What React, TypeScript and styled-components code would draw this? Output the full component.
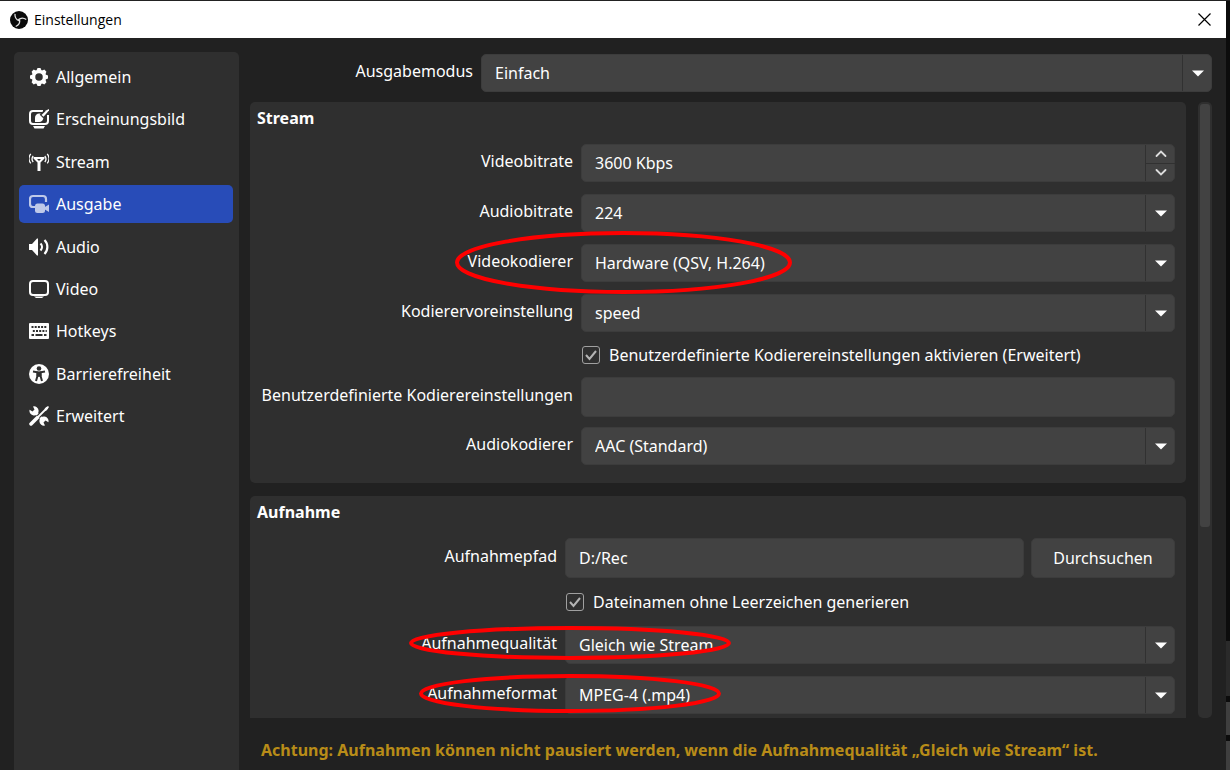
import React, { useState } from 'react';
import styled, { createGlobalStyle, css } from 'styled-components';

const GlobalStyle = createGlobalStyle`
  * { box-sizing: border-box; }
  html, body, #root { height: 100%; }
  body {
    margin: 0;
    background: #0c0c0c;
    color: #fefefe;
    font: 16px/22px 'Noto Sans', 'Open Sans', sans-serif;
    overflow: hidden;
  }
  button, input, select { font: inherit; color: inherit; }
`;

const Desktop = styled.div`
  height: 100vh;
  display: flex;
  border-top: 1px solid #222;
`;

const Window = styled.div`
  flex: 1;
  min-width: 0;
  display: flex;
  flex-direction: column;
  background: #212121;
`;

const Backdrop = styled.div`
  width: 4px;
  display: flex;
  flex-direction: column;
  justify-content: flex-end;
  gap: 6px;
`;

const BackdropPanel = styled.div<{ $h: number; $light?: boolean }>`
  height: ${(p) => p.$h}px;
  background: ${(p) => (p.$light ? '#3f3f3f' : '#2a2a2a')};
`;

const TitleBar = styled.header`
  height: 37px;
  flex: none;
  display: flex;
  align-items: center;
  gap: 6px;
  padding: 0 15px 0 10px;
  background: #fff;
  color: #000;
  font-family: 'Open Sans', sans-serif;
  font-size: 14px;
`;

const Title = styled.span`
  flex: 1;
`;

const CloseButton = styled.button`
  width: 14px;
  height: 14px;
  padding: 0;
  border: 0;
  background: none;
  display: grid;
  place-items: center;
`;

const Content = styled.div`
  flex: 1;
  min-height: 0;
  display: flex;
  gap: 11px;
  padding: 14px 14px 0;
`;

const Sidebar = styled.nav`
  width: 225px;
  flex: none;
  padding: 6px 6px 0 5px;
  background: #2f2f2f;
  border-radius: 5px 5px 0 0;
`;

const NavList = styled.ul`
  height: 377px;
  margin: 0;
  padding: 0;
  list-style: none;
  display: flex;
  flex-direction: column;
  justify-content: space-between;
`;

const NavItem = styled.button<{ $active: boolean }>`
  width: 100%;
  height: 38px;
  padding: 0 10px;
  display: flex;
  align-items: center;
  gap: 7px;
  border: 0;
  border-radius: 5px;
  background: ${(p) => (p.$active ? '#284cb8' : 'transparent')};
  text-align: left;
  svg { flex: none; opacity: ${(p) => (p.$active ? 0.7 : 1)}; }
`;

const Main = styled.main`
  flex: 1;
  min-width: 0;
  display: flex;
  flex-direction: column;
`;

const Row = styled.div<{ $label: number }>`
  position: relative;
  display: grid;
  grid-template-columns: ${(p) => p.$label}px minmax(0, 1fr);
  column-gap: 8px;
  align-items: center;
`;

const Label = styled.label`
  text-align: right;
  white-space: nowrap;
  padding-bottom: 4px;
`;

const ModeRow = styled(Row)`
  padding-top: 2px;
  margin-bottom: 10px;
`;

const field = css`
  width: 100%;
  border: 1px solid #3c3c3c;
  border-radius: 5px;
  background: #424242;
  padding: 0 13px;
  outline: 0;
`;

const FieldBox = styled.div`
  position: relative;
  min-width: 0;
`;

const Select = styled.select`
  ${field}
  display: block;
  height: 38px;
  appearance: none;
`;

const TextInput = styled.input<{ $h?: number }>`
  ${field}
  display: block;
  height: ${(p) => p.$h ?? 40}px;
`;

const FieldEnd = styled.div`
  position: absolute;
  top: 1px;
  right: 0;
  bottom: 1px;
  width: 30px;
  border-left: 1px solid #313131;
  display: grid;
  place-items: center;
  pointer-events: none;
`;

const Spinner = styled(FieldEnd)`
  grid-template-rows: 1fr 1fr;
  pointer-events: auto;
`;

const SpinButton = styled.button`
  width: 100%;
  height: 18px;
  padding: 0;
  border: 0;
  background: none;
  display: grid;
  place-items: center;
  & + & { border-top: 1px solid #313131; }
`;

const ScrollArea = styled.div`
  height: 616px;
  flex: none;
  display: flex;
  gap: 12px;
`;

const Groups = styled.div`
  flex: 1;
  min-width: 0;
  overflow: hidden;
  display: flex;
  flex-direction: column;
  gap: 13px;
`;

const Group = styled.section`
  flex: none;
  padding: 5px 11px 18px 7px;
  background: #2f2f2f;
  border-radius: 5px;
`;

const GroupTitle = styled.h2`
  margin: 0 0 15px;
  font-size: 16px;
  line-height: 22px;
  font-weight: 700;
`;

const Rows = styled.div<{ $gap: number }>`
  display: flex;
  flex-direction: column;
  gap: ${(p) => p.$gap}px;
  & + & { margin-top: 11px; }
`;

const CheckRow = styled.div<{ $indent: number }>`
  height: 24px;
  padding-left: ${(p) => p.$indent}px;
  display: flex;
  align-items: center;
`;

const CheckLabel = styled.label`
  display: flex;
  align-items: center;
  gap: 9px;
  position: relative;
`;

const CheckBox = styled.input`
  appearance: none;
  width: 18px;
  height: 18px;
  margin: 0;
  border: 1px solid #a0a0a0;
  border-radius: 3px;
`;

const Tick = styled.svg`
  position: absolute;
  left: 3px;
  pointer-events: none;
`;

const PathFields = styled.div`
  display: flex;
  gap: 7px;
`;

const Browse = styled.button`
  width: 144px;
  height: 40px;
  flex: none;
  border: 1px solid #3c3c3c;
  border-radius: 5px;
  background: #424242;
`;

const ScrollTrack = styled.div`
  width: 14px;
  padding: 2px;
  border-radius: 5px;
  background: #2f2f2f;
`;

const ScrollThumb = styled.div`
  height: 423px;
  border-radius: 3px;
  background: #424242;
`;

const Warning = styled.p`
  margin: 21px 0 0 11px;
  font-weight: 700;
  color: #b88c18;
  white-space: nowrap;
`;

const MarkerSvg = styled.svg<{ $x: number; $up: number }>`
  position: absolute;
  left: ${(p) => p.$x}px;
  top: ${(p) => -p.$up}px;
  pointer-events: none;
  z-index: 2;
`;

const Marker = ({ x, up, w, h }: { x: number; up: number; w: number; h: number }) => (
  <MarkerSvg $x={x} $up={up} width={w} height={h} aria-hidden="true">
    <ellipse cx={w / 2} cy={h / 2} rx={w / 2 - 2} ry={h / 2 - 2} fill="none" stroke="#f00" strokeWidth="4" />
  </MarkerSvg>
);

const ObsLogo = () => (
  <svg width="18" height="18" viewBox="0 0 18 18" fill="none">
    <circle cx="9" cy="9" r="9" fill="#0a0a0a" />
    {[0, 120, 240].map((a) => (
      <path key={a} d="M9.300 9.800C6.500 8.800 4.600 6.500 5 2.900" stroke="#e0e0e0" strokeWidth="1.300" transform={`rotate(${a} 9 9)`} />
    ))}
  </svg>
);

const Icon = ({ children }: { children: React.ReactNode }) => (
  <svg width="20" height="20" viewBox="0 0 20 20" fill="none" stroke="none" aria-hidden="true">
    {children}
  </svg>
);

const icons = {
  gear: (
    <Icon>
      <circle cx="10" cy="10" r="5.500" stroke="#fefefe" strokeWidth="3.500" />
      {[0, 45, 90, 135, 180, 225, 270, 315].map((a) => (
        <path key={a} d="M7.500 3.500 8.500 1h3l1 2.500z" fill="#fefefe" transform={`rotate(${a} 10 10)`} />
      ))}
    </Icon>
  ),
  look: (
    <Icon>
      <path d="M14 2H4a3 3 0 0 0-3 3v7a3 3 0 0 0 3 3h12a3 3 0 0 0 3-3V6" stroke="#fefefe" strokeWidth="2" />
      <path d="M4 17h12l-1.500 2.500h-9z" fill="#fefefe" />
      <path d="M6 13V8.800a4.200 4.200 0 1 1 4.200 4.200z" fill="#fefefe" />
      <path d="m12.500 7.500 6.500-7" stroke="#2f2f2f" strokeWidth="5" />
      <path d="m12.500 6 5-4.800L20 0v1.500l-5.500 6.300z" fill="#fefefe" />
    </Icon>
  ),
  stream: (
    <Icon>
      <path d="M4.500 5h11v1.500L11.500 10.500V19h-3v-8.500L4.500 6.500z" fill="#fefefe" />
      <path d="M8 7h4l-2 2z" fill="#2f2f2f" />
      <path d="M4.200 4a4.800 4.800 0 0 0 0 6M1.800 1.800a7.500 7.500 0 0 0 0 9.500M15.800 4a4.800 4.800 0 0 1 0 6M18.200 1.800a7.500 7.500 0 0 1 0 9.500" stroke="#fefefe" strokeWidth="1.300" />
    </Icon>
  ),
  output: (
    <Icon>
      <path d="M6 13H4a3 3 0 0 1-3-3V5a3 3 0 0 1 3-3h10a3 3 0 0 1 3 3v3" stroke="#fefefe" strokeWidth="2.200" />
      <rect x="6" y="9.500" width="10" height="9.500" rx="2.500" fill="#fefefe" />
      <path d="m15 13.500 5-3v7.500l-5-3z" fill="#fefefe" />
    </Icon>
  ),
  audio: (
    <Icon>
      <path d="M0 7h3l5-5.500h1v17H8L3 13H0z" fill="#fefefe" />
      <path d="M11.500 6.500a5 5 0 0 1 0 7M15.500 3a10 10 0 0 1 0 14" stroke="#fefefe" strokeWidth="2.200" />
    </Icon>
  ),
  video: (
    <Icon>
      <rect x="1" y="2" width="18" height="14" rx="3" stroke="#fefefe" strokeWidth="2" />
      <path d="M5 17.500h10l-2 1.500H7z" fill="#fefefe" />
    </Icon>
  ),
  keys: (
    <Icon>
      <rect y="2" width="20" height="16" rx="1" fill="#fefefe" />
      <path d="M2.500 6h15M3.800 10h14" stroke="#2f2f2f" strokeWidth="2" strokeDasharray="2 1.200" />
      <path d="M2.500 14h2.500M6.500 14h7M15 14h2.500" stroke="#2f2f2f" strokeWidth="2" />
    </Icon>
  ),
  access: (
    <Icon>
      <circle cx="10" cy="10" r="10" fill="#fefefe" />
      <circle cx="10" cy="4.500" r="2.300" fill="#2f2f2f" />
      <path d="M4 7.500 8.500 8.300v3.500L7 17M16 7.500l-4.500.8v3.500L13 17" stroke="#2f2f2f" strokeWidth="2" />
      <path d="M7.500 7.500h5V12l-2.500 1-2.500-1z" fill="#2f2f2f" />
    </Icon>
  ),
  tools: (
    <Icon>
      <path d="m5 5 10 10" stroke="#fefefe" strokeWidth="3" />
      <path d="M.6 3.800 3.500 5.500l2-2L4 .5A4.600 4.600 0 1 1 .6 3.800zM19.400 16.200l-2.900-1.700-2 2 1.500 3A4.600 4.600 0 1 1 19.400 16.200z" fill="#fefefe" />
      <path d="M19 1 8 12" stroke="#2f2f2f" strokeWidth="4" />
      <path d="M18.500 1.500 9 11" stroke="#fefefe" strokeWidth="1.800" />
      <path d="M15.800 2.200 19 0l1 1-2.200 3.200-2 1z" fill="#fefefe" />
      <path d="m8.500 11.500-6.500 6.500" stroke="#fefefe" strokeWidth="3.500" strokeLinecap="round" />
    </Icon>
  ),
};

const navItems: [string, React.ReactNode][] = [
  ['Allgemein', icons.gear],
  ['Erscheinungsbild', icons.look],
  ['Stream', icons.stream],
  ['Ausgabe', icons.output],
  ['Audio', icons.audio],
  ['Video', icons.video],
  ['Hotkeys', icons.keys],
  ['Barrierefreiheit', icons.access],
  ['Erweitert', icons.tools],
];

const DropDown = ({ id, value }: { id: string; value: string }) => (
  <FieldBox>
    <Select id={id} defaultValue={value}>
      <option>{value}</option>
    </Select>
    <FieldEnd>
      <svg width="12" height="7" viewBox="0 0 12 7"><path d="M0 .5h12L6 6.500z" fill="#fefefe" /></svg>
    </FieldEnd>
  </FieldBox>
);

const Chevron = ({ d }: { d: string }) => (
  <svg width="12" height="8" viewBox="0 0 12 8" fill="none" stroke="#dcdcdc" strokeWidth="1.800" strokeLinecap="round"><path d={d} /></svg>
);

const Check = ({ indent, text }: { indent: number; text: string }) => (
  <CheckRow $indent={indent}>
    <CheckLabel>
      <CheckBox type="checkbox" defaultChecked />
      <Tick width="12" height="12" viewBox="0 0 12 12" fill="none" stroke="#b4b4b4" strokeWidth="2"><path d="m1 6 3.500 4L11 2" /></Tick>
      {text}
    </CheckLabel>
  </CheckRow>
);

export default function App() {
  const [active, setActive] = useState('Ausgabe');
  return (
    <>
      <GlobalStyle />
      <Desktop>
        <Window>
          <TitleBar>
            <ObsLogo />
            <Title>Einstellungen</Title>
            <CloseButton aria-label="Schließen">
              <svg width="13" height="13" viewBox="0 0 13 13" stroke="#000" strokeWidth="1.200"><path d="m.5.5 12 12M12.500.5l-12 12" /></svg>
            </CloseButton>
          </TitleBar>
          <Content>
            <Sidebar>
              <NavList>
                {navItems.map(([name, icon]) => (
                  <li key={name}>
                    <NavItem $active={name === active} onClick={() => setActive(name)}>{icon}{name}</NavItem>
                  </li>
                ))}
              </NavList>
            </Sidebar>
            <Main>
              <ModeRow $label={223}>
                <Label htmlFor="mode">Ausgabemodus</Label>
                <DropDown id="mode" value="Einfach" />
              </ModeRow>
              <ScrollArea>
                <Groups>
                  <Group>
                    <GroupTitle>Stream</GroupTitle>
                    <Rows $gap={12}>
                      <Row $label={316}>
                        <Label htmlFor="vbit">Videobitrate</Label>
                        <FieldBox>
                          <TextInput $h={38} id="vbit" defaultValue="3600 Kbps" />
                          <Spinner>
                            <SpinButton aria-label="Erhöhen"><Chevron d="M1.500 6 6 1.500 10.500 6" /></SpinButton>
                            <SpinButton aria-label="Verringern"><Chevron d="M1.500 1 6 5.500 10.500 1" /></SpinButton>
                          </Spinner>
                        </FieldBox>
                      </Row>
                      <Row $label={316}>
                        <Label htmlFor="abit">Audiobitrate</Label>
                        <DropDown id="abit" value="224" />
                      </Row>
                      <Row $label={316}>
                        <Label htmlFor="venc">Videokodierer</Label>
                        <DropDown id="venc" value="Hardware (QSV, H.264)" />
                        <Marker x={198} up={13} w={337} h={63} />
                      </Row>
                      <Row $label={316}>
                        <Label htmlFor="preset">Kodierervoreinstellung</Label>
                        <DropDown id="preset" value="speed" />
                      </Row>
                    </Rows>
                    <Rows $gap={10}>
                      <Check indent={325} text="Benutzerdefinierte Kodierereinstellungen aktivieren (Erweitert)" />
                      <Row $label={316}>
                        <Label htmlFor="custom">Benutzerdefinierte Kodierereinstellungen</Label>
                        <TextInput id="custom" />
                      </Row>
                      <Row $label={316}>
                        <Label htmlFor="aenc">Audiokodierer</Label>
                        <DropDown id="aenc" value="AAC (Standard)" />
                      </Row>
                    </Rows>
                  </Group>
                  <Group>
                    <GroupTitle>Aufnahme</GroupTitle>
                    <Rows $gap={12}>
                      <Row $label={300}>
                        <Label htmlFor="path">Aufnahmepfad</Label>
                        <PathFields>
                          <TextInput id="path" defaultValue="D:/Rec" />
                          <Browse>Durchsuchen</Browse>
                        </PathFields>
                      </Row>
                      <Check indent={309} text="Dateinamen ohne Leerzeichen generieren" />
                      <Row $label={300}>
                        <Label htmlFor="quality">Aufnahmequalität</Label>
                        <DropDown id="quality" value="Gleich wie Stream" />
                        <Marker x={152} up={0} w={322} h={34} />
                      </Row>
                      <Row $label={300}>
                        <Label htmlFor="format">Aufnahmeformat</Label>
                        <DropDown id="format" value="MPEG-4 (.mp4)" />
                        <Marker x={162} up={2} w={302} h={39} />
                      </Row>
                    </Rows>
                  </Group>
                </Groups>
                <ScrollTrack>
                  <ScrollThumb />
                </ScrollTrack>
              </ScrollArea>
              <Warning>Achtung: Aufnahmen können nicht pausiert werden, wenn die Aufnahmequalität „Gleich wie Stream“ ist.</Warning>
            </Main>
          </Content>
        </Window>
        <Backdrop>
          <BackdropPanel $h={55} />
          <BackdropPanel $h={33} $light />
          <BackdropPanel $h={29} $light />
        </Backdrop>
      </Desktop>
    </>
  );
}
